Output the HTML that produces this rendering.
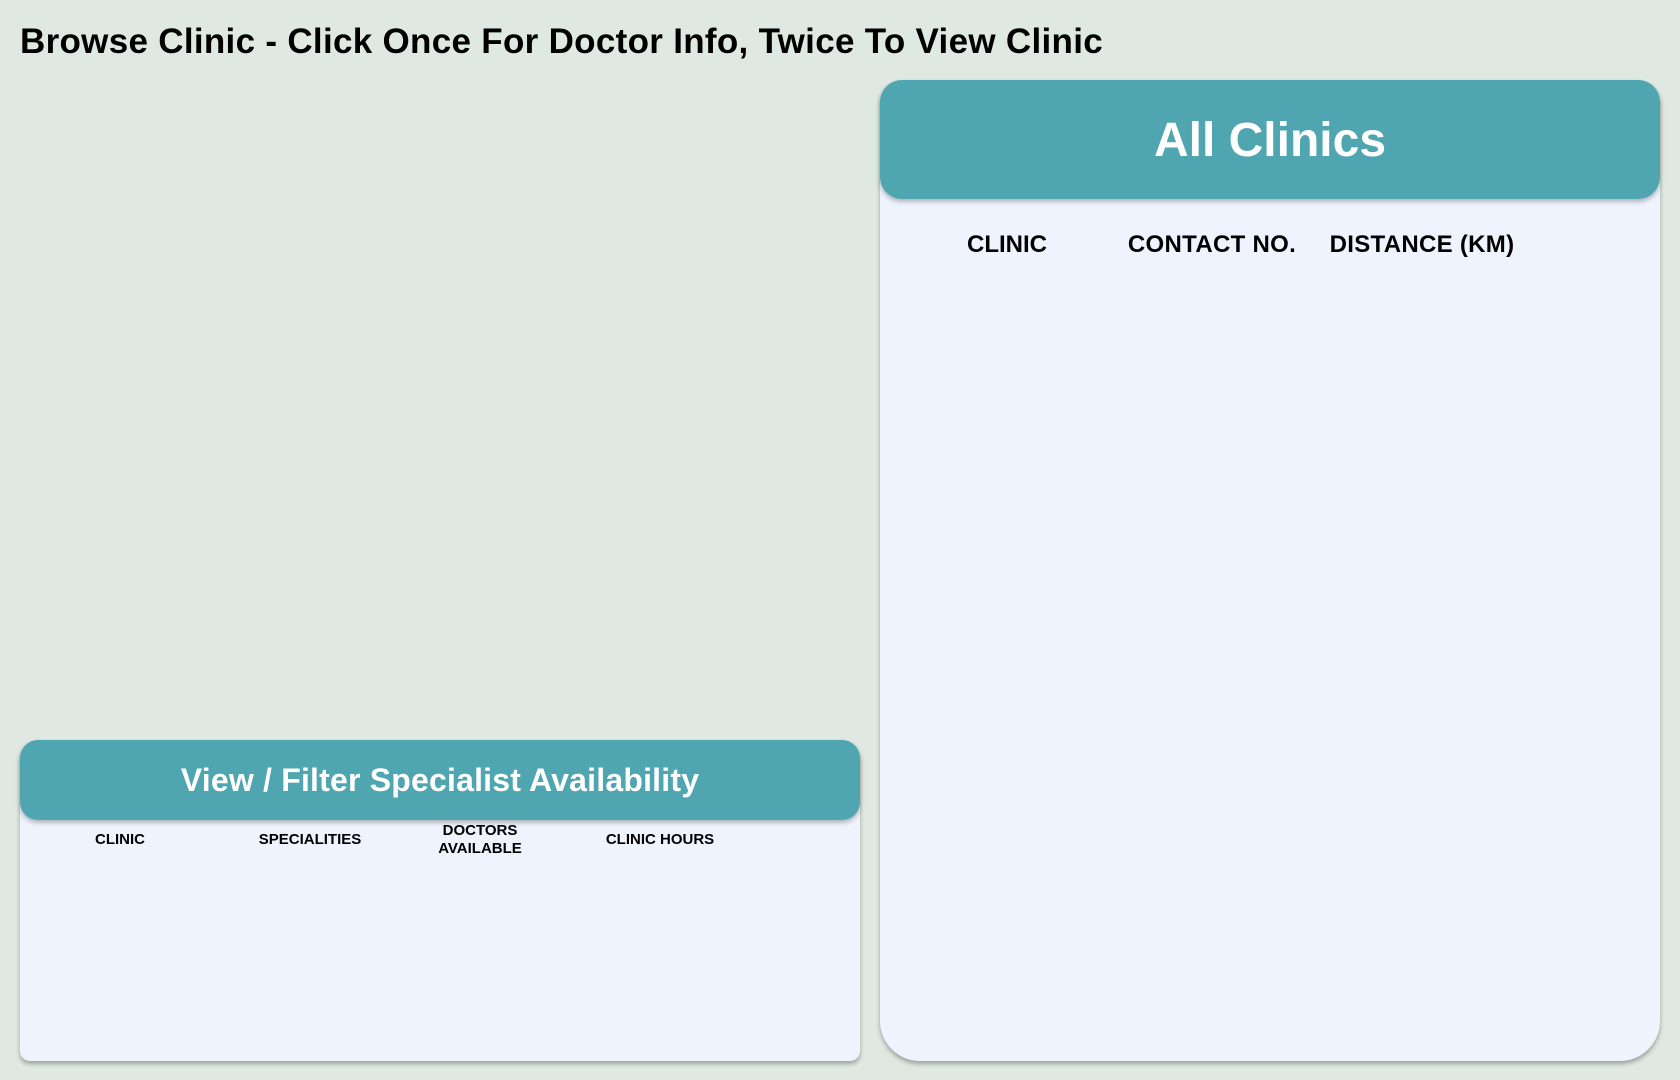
<!DOCTYPE html>
<html><head><meta charset="utf-8"><style>
*{margin:0;padding:0;box-sizing:border-box}
body{width:1680px;height:1080px;background:#e0e9e1;font-family:"Liberation Sans",sans-serif;position:relative;overflow:hidden;color:#000}
h1{position:absolute;left:20px;top:22px;font-size:35px;font-weight:bold;letter-spacing:0.3px}
.panel{position:absolute;background:#eef3fe;box-shadow:0 3px 5px rgba(0,0,0,.3)}
.head{position:absolute;left:0;right:0;top:0;background:#4fa5b0;color:#fff;font-weight:bold;display:flex;align-items:center;justify-content:center;box-shadow:0 3px 4px rgba(0,0,0,.25)}
.c{position:absolute;font-weight:bold;text-align:center;transform:translateX(-50%);white-space:nowrap}
</style></head><body>
<h1>Browse Clinic - Click Once For Doctor Info, Twice To View Clinic</h1>
<div class="panel" style="left:880px;top:80px;width:780px;height:981px;border-radius:22px 22px 40px 40px">
 <div class="head" style="height:119px;border-radius:22px;font-size:48px;padding-top:2px">All Clinics</div>
 <div class="c" style="left:127px;top:151px;font-size:24px">CLINIC</div>
 <div class="c" style="left:332px;top:151px;font-size:24px;letter-spacing:0.3px">CONTACT NO.</div>
 <div class="c" style="left:542px;top:151px;font-size:24px;letter-spacing:0.3px">DISTANCE (KM)</div>
</div>
<div class="panel" style="left:20px;top:740px;width:840px;height:321px;border-radius:18px 18px 10px 10px">
 <div class="head" style="height:80px;border-radius:18px;font-size:32px;letter-spacing:0.2px">View / Filter Specialist Availability</div>
 <div class="c" style="left:100px;top:91px;font-size:15px">CLINIC</div>
 <div class="c" style="left:290px;top:91px;font-size:15px">SPECIALITIES</div>
 <div class="c" style="left:460px;top:82px;font-size:15px;line-height:18px">DOCTORS<br>AVAILABLE</div>
 <div class="c" style="left:640px;top:91px;font-size:15px">CLINIC HOURS</div>
</div>
</body></html>
